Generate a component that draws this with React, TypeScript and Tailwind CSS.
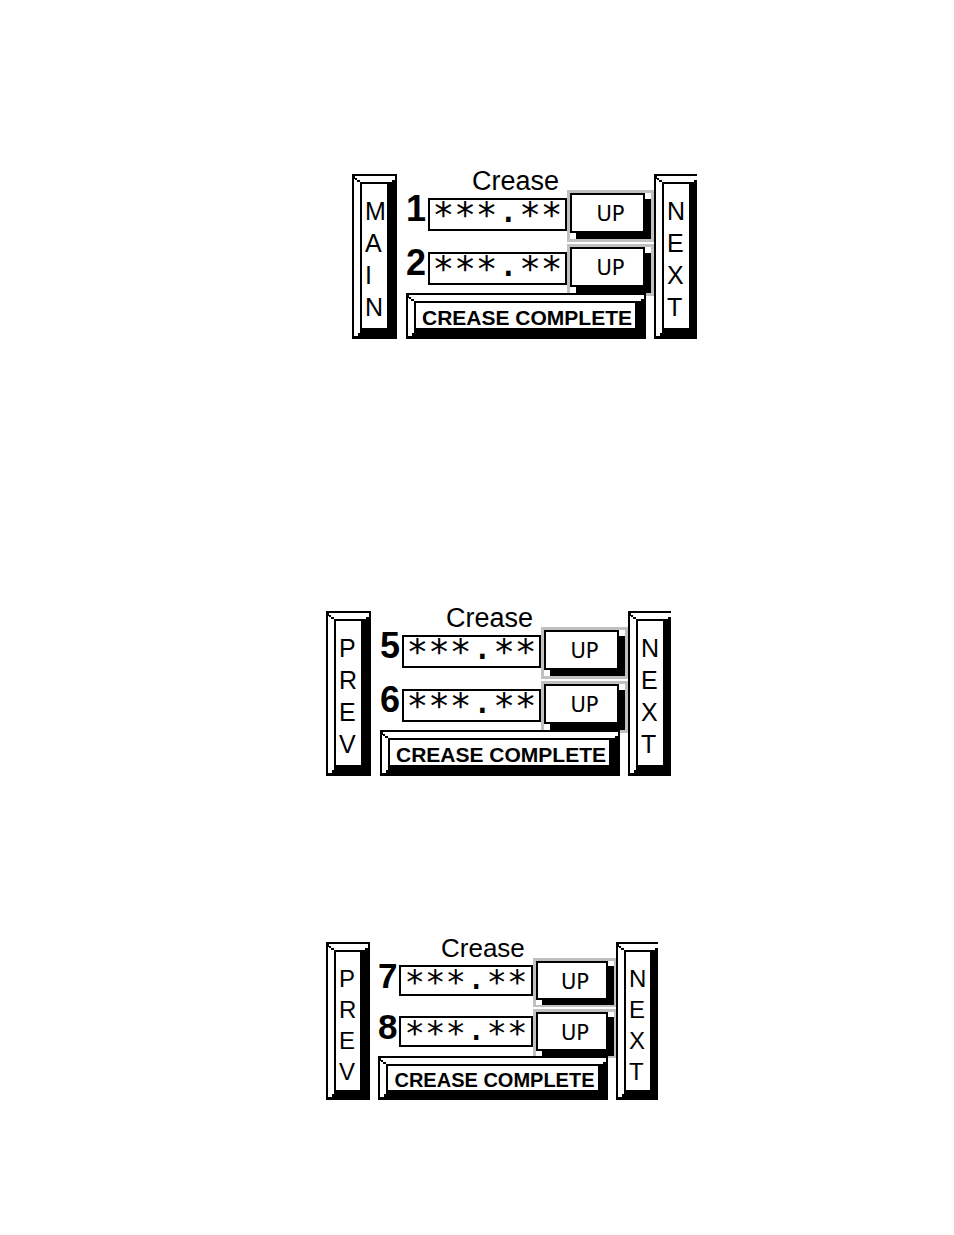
import type { ReactNode } from 'react';

type Size = 'large' | 'small';

interface Station {
  id: number;
  value: string;
}

interface CreasePanelProps {
  size: Size;
  back: string;
  stations: Station[];
  className?: string;
}

interface BevelProps {
  label: string;
  className: string;
  faceClassName: string;
  flush?: boolean;
  children: ReactNode;
}

/** Raised key: white highlight along the top and left, heavy black on the other two sides. */
function BevelButton({ label, className, faceClassName, flush, children }: BevelProps) {
  return (
    <button type="button" aria-label={label} className={`relative flex bg-black pt-[10px] pl-[10px] ${className}`}>
      <span
        aria-hidden
        className={`absolute top-[2px] left-[2px] h-[6px] bg-white [clip-path:polygon(0_0,100%_0,100%_4px,calc(100%-3px)_4px,calc(100%-3px)_100%,0_100%)] ${
          flush ? 'right-0' : 'right-[2px]'
        }`}
      />
      <span
        aria-hidden
        className="absolute top-[2px] bottom-[3px] left-[2px] w-[6px] bg-white [clip-path:polygon(0_0,100%_0,100%_calc(100%-3px),4px_calc(100%-3px),4px_100%,0_100%)]"
      />
      <svg aria-hidden className="absolute top-[2px] left-[2px] h-[6px] w-[6px]" viewBox="0 0 6 6" shapeRendering="crispEdges">
        <path d="M0 0h1v3h-1zM1 2h2v2h-2zM3 4h3v2h-3z" fill="black" />
      </svg>
      <span className={`flex flex-1 bg-white ${faceClassName}`}>{children}</span>
    </button>
  );
}

function SideButton({ word, size, flush }: { word: string; size: Size; flush?: boolean }) {
  const large = size === 'large';
  return (
    <BevelButton
      label={word}
      flush={flush}
      className={`${large ? 'h-[165px] pb-[11px]' : 'h-[158px] pb-[10px]'} ${flush ? 'pr-2' : 'pr-[10px]'}`}
      faceClassName={`flex-col items-start pl-[3px] pt-[11px] ${large ? 'w-[25px]' : 'w-6'}`}
    >
      {word.split('').map((letter, i) => (
        <span key={i} className={large ? 'text-[25px] leading-[32px]' : 'text-[24px] leading-[31px]'}>
          {letter}
        </span>
      ))}
    </BevelButton>
  );
}

function Readout({ value, size }: { value: string; size: Size }) {
  const [whole, fraction] = value.split('.');
  const large = size === 'large';
  // asterisks sit high in the font, so they are dropped to the middle of the box
  const star = 'relative top-[5px]';
  return (
    <output
      className={`shrink-0 border-2 border-black bg-white text-center font-['DejaVu_Sans_Mono',monospace] whitespace-nowrap ${
        large ? 'mt-2 h-[33px] w-[139px] text-[36px] leading-[20px]' : 'mt-[7px] h-[31px] w-[134px] text-[34px] leading-[20px]'
      }`}
    >
      <span className={star}>{whole}</span>.<span className={star}>{fraction}</span>
    </output>
  );
}

function StationRow({ station, size }: { station: Station; size: Size }) {
  const large = size === 'large';
  return (
    <div className="flex items-start">
      <span
        className={`shrink-0 font-bold ${
          large ? 'w-[22px] text-[36px] leading-[38px]' : 'w-[21px] text-[35px] leading-[36px]'
        }`}
      >
        {station.id}
      </span>
      <Readout value={station.value} size={size} />
      <div
        className={`border-t-[3px] border-l-[3px] border-[#c0c0c0] bg-white pr-[6px] ${
          large ? 'border-r-[3px] border-b-[3px] pb-[6px]' : 'border-r-2 border-b-2 pb-[5px]'
        }`}
      >
        <button
          type="button"
          aria-label={`UP ${station.id}`}
          className={`block border-2 border-black bg-white pt-[3px] pl-[6px] font-['DejaVu_Sans',sans-serif] text-[21px] leading-none ${
            large ? 'h-10 w-[75px] shadow-[6px_6px_0_black]' : 'h-[39px] w-[72px] shadow-[6px_5px_0_black]'
          }`}
        >
          UP
        </button>
      </div>
    </div>
  );
}

function CreasePanel({ size, back, stations, className = '' }: CreasePanelProps) {
  const large = size === 'large';
  return (
    <section className={`flex items-end ${className}`}>
      <SideButton word={back} size={size} />
      <div className={`flex flex-col items-start ${large ? 'ml-[9px]' : 'ml-2'}`}>
        <h2 className={large ? 'pl-[66px] -mb-[6px] text-[27px] leading-[30px]' : 'pl-[63px] -mb-[5px] text-[26px] leading-[30px]'}>
          Crease
        </h2>
        <div className="flex flex-col gap-[2px]">
          {stations.map((station) => (
            <StationRow key={station.id} station={station} size={size} />
          ))}
        </div>
        <BevelButton
          label="CREASE COMPLETE"
          className={large ? '-mt-[3px] h-[46px] w-[240px] pr-[11px] pb-[11px]' : '-mt-[2px] h-[44px] w-[230px] pr-[10px] pb-[10px]'}
          faceClassName="items-center justify-center pt-[3px] pl-[3px]"
        >
          <span className={`font-bold whitespace-nowrap ${large ? 'text-[21px] leading-[21px]' : 'text-[20px] leading-[20px]'}`}>
            CREASE COMPLETE
          </span>
        </BevelButton>
      </div>
      <SideButton word="NEXT" size={size} flush />
    </section>
  );
}

export default function App() {
  return (
    <main className="flex min-h-screen flex-col items-start bg-white pt-[166px] pb-[135px] pl-[326px] font-['Liberation_Sans',sans-serif] text-black">
      <CreasePanel
        size="large"
        back="MAIN"
        className="ml-[26px]"
        stations={[
          { id: 1, value: '***.**' },
          { id: 2, value: '***.**' },
        ]}
      />
      <CreasePanel
        size="large"
        back="PREV"
        className="mt-[264px]"
        stations={[
          { id: 5, value: '***.**' },
          { id: 6, value: '***.**' },
        ]}
      />
      <CreasePanel
        size="small"
        back="PREV"
        className="mt-[157px]"
        stations={[
          { id: 7, value: '***.**' },
          { id: 8, value: '***.**' },
        ]}
      />
    </main>
  );
}
